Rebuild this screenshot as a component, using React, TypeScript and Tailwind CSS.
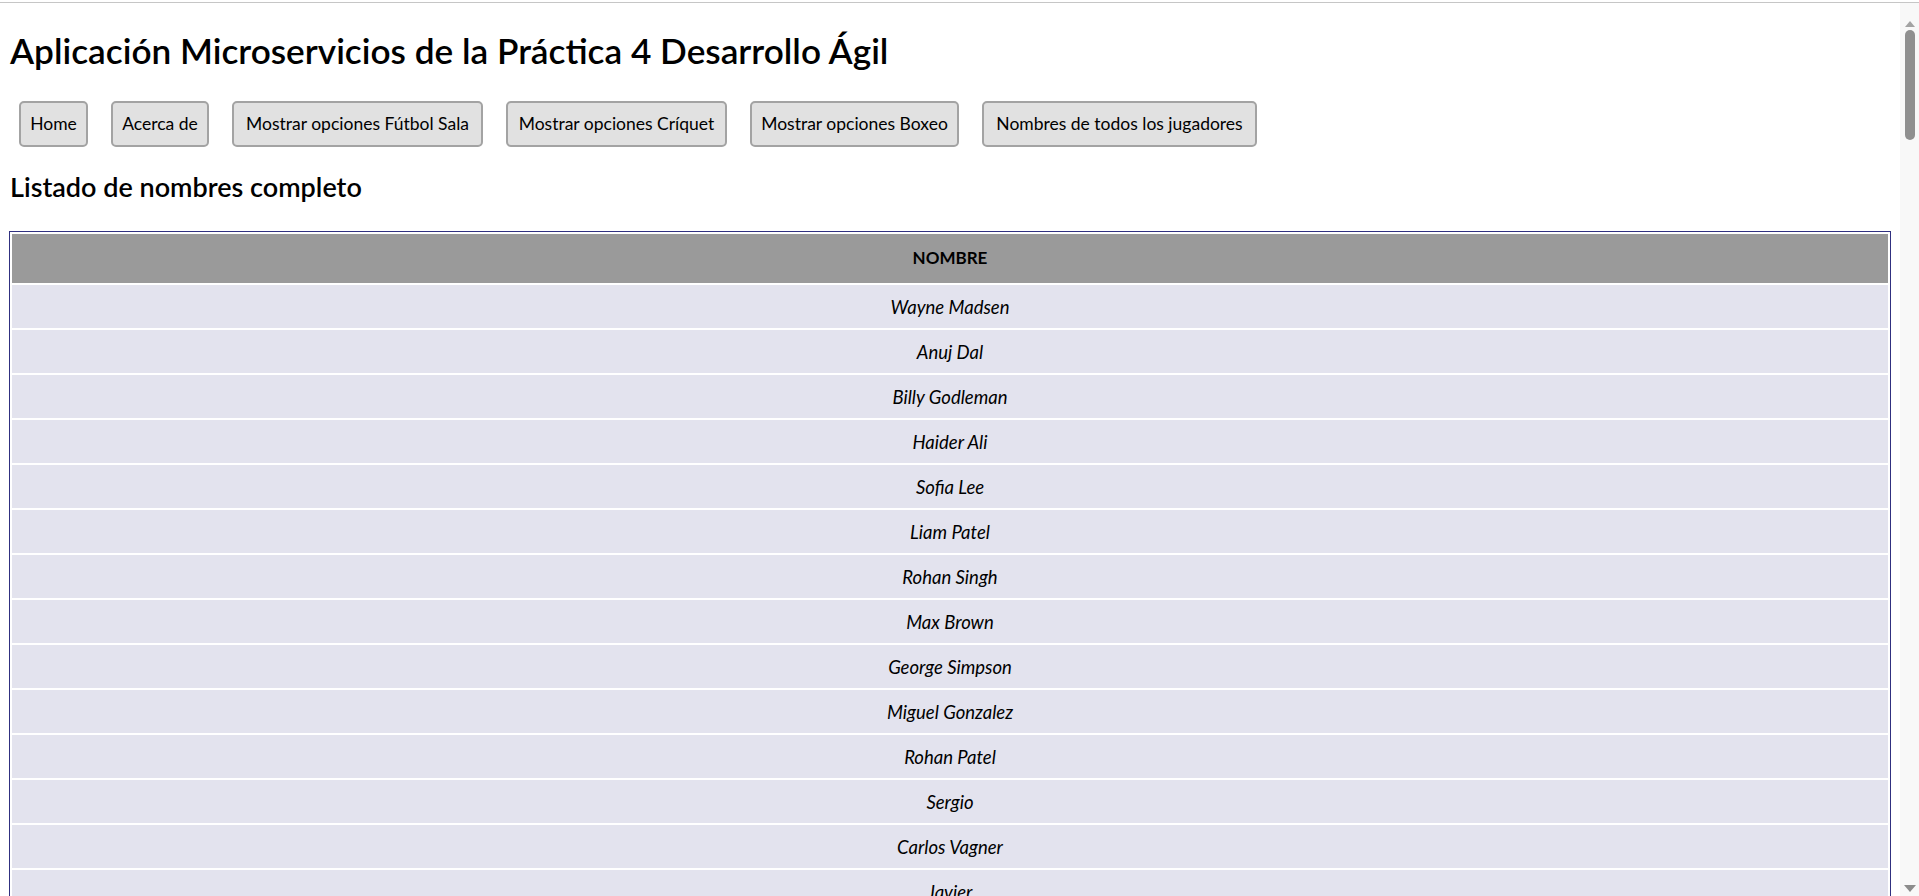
import React from 'react';

const botones = [
  { label: 'Home', width: 'w-[69px]' },
  { label: 'Acerca de', width: 'w-[98px]' },
  { label: 'Mostrar opciones Fútbol Sala', width: 'w-[251px]' },
  { label: 'Mostrar opciones Críquet', width: 'w-[221px]' },
  { label: 'Mostrar opciones Boxeo', width: 'w-[209px]' },
  { label: 'Nombres de todos los jugadores', width: 'w-[275px]' },
];

const jugadores = [
  'Wayne Madsen',
  'Anuj Dal',
  'Billy Godleman',
  'Haider Ali',
  'Sofia Lee',
  'Liam Patel',
  'Rohan Singh',
  'Max Brown',
  'George Simpson',
  'Miguel Gonzalez',
  'Rohan Patel',
  'Sergio',
  'Carlos Vagner',
  'Javier',
];

const App: React.FC = () => {
  return (
    <div className="h-screen overflow-hidden flex flex-col bg-white text-black font-['Lato','Liberation_Sans',sans-serif]">
      {/* top rule */}
      <div className="h-[3px] shrink-0 border-b border-[#c6c6c6]" />

      <div className="flex flex-1 min-h-0">
        <main className="flex-1 min-w-0 overflow-hidden px-[9px]">
          <h1 className="mt-[26px] pl-[1px] text-[35.2px] leading-[1.2] font-semibold">
            Aplicación Microservicios de la Práctica 4 Desarrollo Ágil
          </h1>

          <nav className="mt-[30px] pl-[10px] flex gap-[23px]">
            {botones.map((b) => (
              <button
                key={b.label}
                className={`${b.width} h-[46px] shrink-0 flex items-center justify-center rounded-[5px] border-2 border-[#a3a3a3] bg-[#e1e1e1] text-[17.5px] text-black`}
              >
                {b.label}
              </button>
            ))}
          </nav>

          <h2 className="mt-[24px] pl-[1px] text-[27px] leading-[1.2] font-semibold">
            Listado de nombres completo
          </h2>

          {/* Names table */}
          <table className="mt-[27px] w-full border border-[#303080] border-separate border-spacing-[2px]">
            <thead>
              <tr>
                <th className="h-[49px] bg-[#9a9a9a] text-[17px] font-bold text-center">NOMBRE</th>
              </tr>
            </thead>
            <tbody>
              {jugadores.map((nombre) => (
                <tr key={nombre}>
                  <td className="h-[43px] pt-[3px] bg-[#e3e3ee] text-[18.5px] italic text-center">{nombre}</td>
                </tr>
              ))}
            </tbody>
          </table>
        </main>

        {/* scrollbar */}
        <div className="w-[19px] shrink-0 bg-[#f8f8f8] flex flex-col items-center">
          <svg width="10" height="6" viewBox="0 0 10 6" className="mt-[18px]">
            <polygon points="5,0 10,6 0,6" fill="#a3a3a3" />
          </svg>
          <div className="mt-[3px] w-[10px] h-[110px] rounded-full bg-[#8f8f8f]" />
          <div className="flex-1" />
          <svg width="12" height="7" viewBox="0 0 12 7" className="mb-[4px]">
            <polygon points="0,0 12,0 6,7" fill="#8c8c8c" />
          </svg>
        </div>
      </div>
    </div>
  );
};

export default App;
